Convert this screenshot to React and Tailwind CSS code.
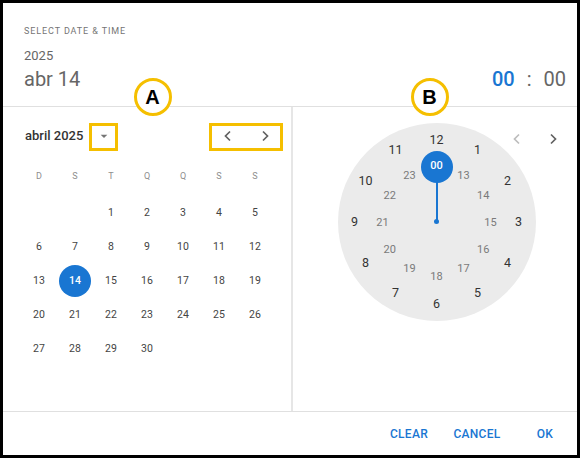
import React from "react";

const weeks = [
  [null, null, 1, 2, 3, 4, 5],
  [6, 7, 8, 9, 10, 11, 12],
  [13, 14, 15, 16, 17, 18, 19],
  [20, 21, 22, 23, 24, 25, 26],
  [27, 28, 29, 30, null, null, null],
];

function ChevronLeft({ color }) {
  return (
    <svg width="10" height="12" viewBox="0 0 10 12">
      <polyline points="7,1.5 2.5,6 7,10.5" fill="none" stroke={color} strokeWidth="1.7" />
    </svg>
  );
}
function ChevronRight({ color }) {
  return (
    <svg width="10" height="12" viewBox="0 0 10 12">
      <polyline points="3,1.5 7.5,6 3,10.5" fill="none" stroke={color} strokeWidth="1.7" />
    </svg>
  );
}

function Clock() {
  const C = 99;
  const outer = [];
  for (let h = 1; h <= 12; h++) {
    const a = ((h % 12) * 30 * Math.PI) / 180;
    outer.push({ label: String(h), x: C + 82 * Math.sin(a), y: C - 82 * Math.cos(a) });
  }
  const inner = [];
  for (let h = 13; h <= 23; h++) {
    const a = ((h - 12) * 30 * Math.PI) / 180;
    inner.push({ label: String(h), x: C + 54 * Math.sin(a), y: C - 54 * Math.cos(a) });
  }
  return (
    <div className="relative w-[198px] h-[198px] rounded-full bg-[#ebebeb]">
      <div className="absolute left-[98px] top-[44px] w-[2px] h-[55px] bg-[#1976d2]" />
      <div className="absolute left-[96.5px] top-[96.5px] w-[5px] h-[5px] rounded-full bg-[#1976d2]" />
      <div className="absolute left-[83px] top-[28px] w-[32px] h-[32px] rounded-full bg-[#1976d2] flex items-center justify-center text-white text-[11px] font-medium">
        00
      </div>
      {outer.map((n) => (
        <span
          key={n.label}
          className="absolute -translate-x-1/2 -translate-y-1/2 text-[12.5px] leading-none text-[#333]"
          style={{ left: n.x, top: n.y }}
        >
          {n.label}
        </span>
      ))}
      {inner.map((n) => (
        <span
          key={n.label}
          className="absolute -translate-x-1/2 -translate-y-1/2 text-[11px] leading-none text-[#7a7a7a]"
          style={{ left: n.x, top: n.y }}
        >
          {n.label}
        </span>
      ))}
    </div>
  );
}

function Annot({ letter, className }) {
  return (
    <div
      className={
        "absolute w-[38px] h-[38px] rounded-full border-[3px] border-[#f5bf00] bg-white flex items-center justify-center text-[20px] font-bold text-black font-['Liberation_Sans',Arial,sans-serif] " +
        className
      }
    >
      {letter}
    </div>
  );
}

export default function App() {
  return (
    <div className="w-[586px] h-[463px] bg-white font-['Roboto',sans-serif] relative">
      <div className="w-[580px] h-[458px] border-[3px] border-black flex flex-col">
        {/* header */}
        <div className="h-[104px] border-b border-[#e0e0e0] pl-[21px] pr-[11px] pt-[22px]">
          <div className="text-[9px] leading-[13px] tracking-[0.9px] text-[#757575]">SELECT DATE &amp; TIME</div>
          <div className="mt-[9.5px] text-[13px] leading-[16px] text-[#666]">2025</div>
          <div className="mt-[3.5px] flex items-end justify-between text-[20px] leading-[24px] text-[#666]">
            <span>abr 14</span>
            <span className="flex">
              <span className="font-medium text-[#1976d2]">00</span>
              <span className="mx-[12px]">:</span>
              <span>00</span>
            </span>
          </div>
        </div>
        {/* body */}
        <div className="h-[304px] flex">
          <div className="w-[288px] pl-[18px] pt-[15px]">
            <div className="h-[28px] flex items-center">
              <span className="ml-[4px] text-[13px] font-medium text-[#333]">abril 2025</span>
              <span className="ml-[13px] w-[16px] flex justify-center">
                <svg width="16" height="16" viewBox="0 0 24 24">
                  <path d="M7 10l5 5 5-5z" fill="#757575" />
                </svg>
              </span>
              <span className="ml-[111px] flex items-center">
                <ChevronLeft color="#616161" />
                <span className="ml-[26.5px]">
                  <ChevronRight color="#616161" />
                </span>
              </span>
            </div>
            <div className="mt-[9px] flex h-[36px] items-center">
              {["D", "S", "T", "Q", "Q", "S", "S"].map((d, i) => (
                <span key={i} className="w-[36px] text-center text-[9px] text-[#8e8e8e]">
                  {d}
                </span>
              ))}
            </div>
            <div className="mt-[1px]">
              {weeks.map((w, wi) => (
                <div key={wi} className="flex h-[34px] items-center">
                  {w.map((d, di) => (
                    <div key={di} className="w-[36px] flex justify-center">
                      {d === 14 ? (
                        <span className="w-[32px] h-[32px] rounded-full bg-[#1976d2] text-white font-medium text-[10.5px] flex items-center justify-center">
                          14
                        </span>
                      ) : (
                        <span className="text-[10.5px] text-[#444]">{d ?? ""}</span>
                      )}
                    </div>
                  ))}
                </div>
              ))}
            </div>
          </div>
          <div className="w-[2px] bg-[#e6e6e6]" />
          <div className="flex-1 relative pl-[44.5px] pt-[15.5px]">
            <Clock />
            <span className="absolute left-[219px] top-[26px]">
              <ChevronLeft color="#bdbdbd" />
            </span>
            <span className="absolute left-[255px] top-[26px]">
              <ChevronRight color="#616161" />
            </span>
          </div>
        </div>
        {/* footer */}
        <div className="h-[44px] border-t border-[#e0e0e0] flex items-center justify-end gap-[4px]">
          {["CLEAR", "CANCEL", "OK"].map((b) => (
            <span key={b} className="w-[64px] text-center text-[12px] font-medium tracking-[0.3px] text-[#1976d2]">
              {b}
            </span>
          ))}
        </div>
      </div>
      {/* annotations */}
      <Annot letter="A" className="left-[133.5px] top-[77.5px]" />
      <Annot letter="B" className="left-[410.5px] top-[77.5px]" />
      <div className="absolute left-[89px] top-[123px] w-[29px] h-[28px] border-[3px] border-[#f5bf00]" />
      <div className="absolute left-[209px] top-[123px] w-[74px] h-[28px] border-[3px] border-[#f5bf00]" />
    </div>
  );
}
